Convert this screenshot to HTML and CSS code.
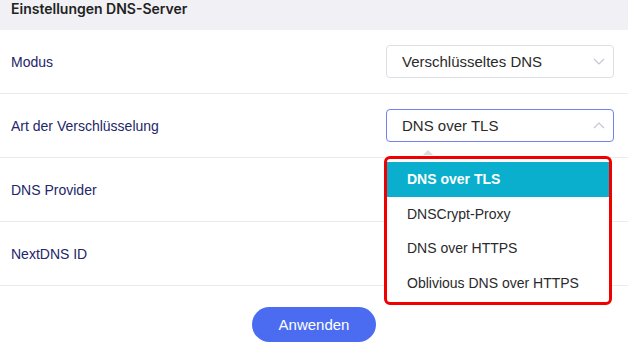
FILE: index.html
```html
<!DOCTYPE html>
<html lang="de">
<head>
    <meta charset="UTF-8">
    <meta name="viewport" content="width=device-width, initial-scale=1.0">
    <title>Einstellungen DNS-Server</title>
    <link rel="stylesheet" href="styles.css">
</head>
<body>
    <div class="panel">
        <div class="panel-head">Einstellungen DNS-Server</div>
        <div class="row">
            <span class="label">Modus</span>
            <div class="select">
                <span>Verschlüsseltes DNS</span>
                <svg class="arrow" width="12" height="7" viewBox="0 0 12 7"><path d="M1 1l5 5 5-5" fill="none" stroke="#c4c7cf" stroke-width="1.2"/></svg>
            </div>
        </div>
        <div class="row">
            <span class="label">Art der Verschlüsselung</span>
            <div class="select open">
                <span>DNS over TLS</span>
                <svg class="arrow" width="12" height="7" viewBox="0 0 12 7"><path d="M1 6l5-5 5 5" fill="none" stroke="#c4c7cf" stroke-width="1.2"/></svg>
                <div class="dropdown">
                    <div class="option active">DNS over TLS</div>
                    <div class="option">DNSCrypt-Proxy</div>
                    <div class="option">DNS over HTTPS</div>
                    <div class="option">Oblivious DNS over HTTPS</div>
                </div>
            </div>
        </div>
        <div class="row">
            <span class="label">DNS Provider</span>
        </div>
        <div class="row">
            <span class="label">NextDNS ID</span>
        </div>
        <div class="actions">
            <button class="btn">Anwenden</button>
        </div>
    </div>
</body>
</html>
```

FILE: styles.css
```css
body {
    margin: 0;
    font-family: "Liberation Sans", Arial, sans-serif;
    background: #fff;
}
.panel {
    width: 628px;
}
.panel-head {
    height: 30px;
    background: #f0f0f5;
    padding-left: 11px;
    font-family: Inter, "Liberation Sans", sans-serif;
    font-weight: 600;
    font-size: 14px;
    color: #222;
    line-height: 18px;
    box-sizing: border-box;
}
.row {
    height: 64px;
    box-sizing: border-box;
    border-bottom: 1px solid #ebebf0;
    display: flex;
    align-items: center;
    justify-content: space-between;
    padding: 0 14px 0 11px;
}
.label {
    font-size: 14px;
    color: #23266a;
}
.select {
    position: relative;
    width: 228px;
    height: 33px;
    box-sizing: border-box;
    border: 1px solid #dcdfe6;
    border-radius: 4px;
    display: flex;
    align-items: center;
    justify-content: space-between;
    padding: 0 8px 0 15px;
    font-size: 15px;
    color: #2a2a2a;
}
.select.open {
    border-color: #7181f0;
}
.dropdown {
    position: absolute;
    left: -3px;
    top: 46px;
    width: 228px;
    box-sizing: border-box;
    border: 3px solid #f20000;
    border-radius: 6px;
    background: #fff;
    padding: 3px 0 2px;
    z-index: 2;
}
.dropdown::before {
    content: "";
    position: absolute;
    left: 36px;
    top: -9px;
    border: 5px solid transparent;
    border-bottom-color: #dcdcdc;
    border-top: 0;
}
.option {
    height: 34.5px;
    line-height: 34px;
    padding-left: 20px;
    font-size: 14px;
    color: #2a2a2a;
}
.option.active {
    background: #09afcc;
    color: #fff;
    font-weight: bold;
}
.actions {
    display: flex;
    justify-content: center;
    padding-top: 21px;
}
.btn {
    width: 124px;
    height: 35px;
    border: none;
    border-radius: 18px;
    background: #4b6cf0;
    color: #fff;
    font-family: "Liberation Sans", Arial, sans-serif;
    font-size: 15px;
}
```
